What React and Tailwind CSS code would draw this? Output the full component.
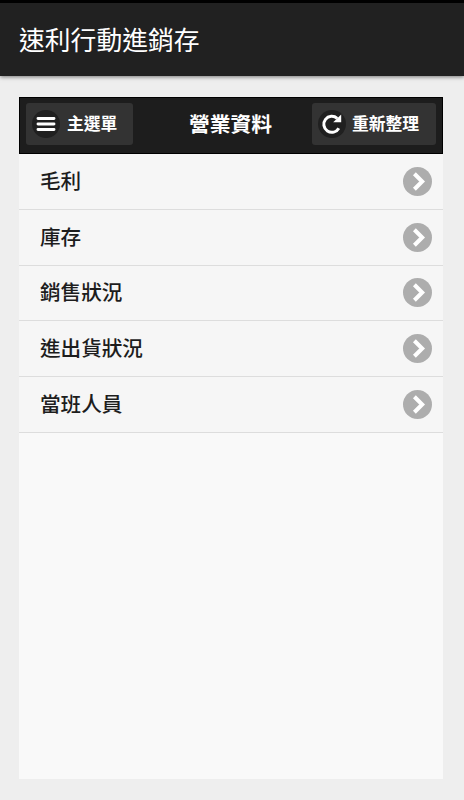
const items = ['毛利', '庫存', '銷售狀況', '進出貨狀況', '當班人員'];

const MenuIcon = () => (
    <svg viewBox="0 0 28 28" className="w-7 h-7 shrink-0">
        <circle cx="14" cy="14" r="14" fill="#202020" />
        <path d="M6 8.5H22M6 14H22M6 19.5H22" stroke="#fff" strokeWidth="2.9" strokeLinecap="round" />
    </svg>
);

const RefreshIcon = () => (
    <svg viewBox="0 0 28 28" className="w-7 h-7 shrink-0">
        <circle cx="14" cy="14" r="14" fill="#202020" />
        <path d="M20.8 18.2A8 8 0 1 1 19.2 8.4" fill="none" stroke="#fff" strokeWidth="3" />
        <path d="M23.2 4.6V12.2H15.2Z" fill="#fff" />
    </svg>
);

const ArrowIcon = () => (
    <svg viewBox="0 0 28 28" className="w-[29px] h-[29px] shrink-0">
        <circle cx="14" cy="14" r="14" fill="#adadad" />
        <path d="M11 6.5L18.5 14L11 21.5" fill="none" stroke="#fff" strokeWidth="3.9" />
    </svg>
);

const App = () => {
    return (
        <div className="w-full h-screen bg-[#eeeeee] font-['Noto_Sans_CJK_TC',sans-serif] flex flex-col overflow-hidden">
            {/* App bar */}
            <header className="h-[76px] shrink-0 bg-[#212121] border-t-[3px] border-black shadow-[0_1px_4px_rgba(0,0,0,0.5)] flex items-center pl-[19px] pb-px">
                <h1 className="text-[25.8px] leading-none text-white">速利行動進銷存</h1>
            </header>

            <main className="mt-[21px] ml-[19px] w-[424px] h-[682px] bg-[#f9f9f9]">
                {/* Toolbar */}
                <div className="h-[57px] bg-[#1d1d1d] border border-black flex items-center justify-between px-[6px] pb-[3px] font-bold">
                    <button className="w-[107px] h-[42px] rounded-[3px] bg-[#333333] text-white text-[16.8px] leading-none flex items-center pl-[6px] gap-[7px]">
                        <MenuIcon />
                        <span className="pb-[2px]">主選單</span>
                    </button>
                    <h2 className="text-[20.8px] leading-none text-white ml-[16px] pb-px">營業資料</h2>
                    <button className="w-[124px] h-[42px] rounded-[3px] bg-[#333333] text-white text-[16.8px] leading-none flex items-center pl-[6px] gap-[6px]">
                        <RefreshIcon />
                        <span className="pb-[2px]">重新整理</span>
                    </button>
                </div>

                <ul>
                    {items.map((item) => (
                        <li key={item} className="h-[55.75px] bg-[#f6f6f6] border-b border-[#dddddd] text-[#1d1d1d] text-[20.6px] font-medium flex items-center justify-between pl-[21px] pr-[11px]">
                            <span className="pb-[2px]">{item}</span>
                            <ArrowIcon />
                        </li>
                    ))}
                </ul>
            </main>
        </div>
    );
};

export default App;
